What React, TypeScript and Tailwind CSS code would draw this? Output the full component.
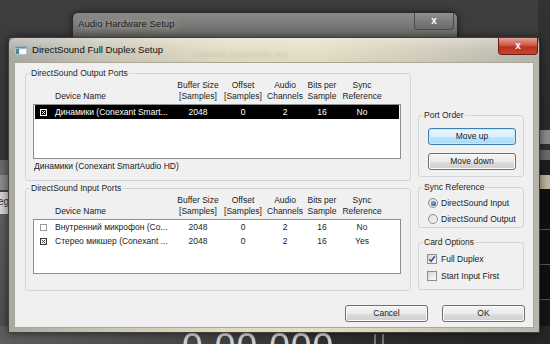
import React from "react";

const COLS = "grid grid-cols-[20px_121px_44px_46px_38px_36px_44px]";

function XBox({ checked, selected }: { checked: boolean; selected?: boolean }) {
  const c = selected ? "#ffffff" : "#3a3a3a";
  const b = selected ? "#ffffff" : checked ? "#3a3a3a" : "#9a9a9a";
  return (
    <svg width="7" height="7" viewBox="0 0 7 7" className="block">
      <rect x="0.5" y="0.5" width="6" height="6" fill="none" stroke={b} strokeWidth="1" />
      {checked && <path d="M1.8 1.8 L5.2 5.2 M5.2 1.8 L1.8 5.2" stroke={c} strokeWidth="1" />}
    </svg>
  );
}

function Row({
  name,
  checked,
  selected,
  sync,
}: {
  name: string;
  checked: boolean;
  selected?: boolean;
  sync: string;
}) {
  return (
    <div
      className={`${COLS} h-[14px] items-center leading-[11px] ${
        selected ? "bg-black text-white" : "text-[#1a1a1a]"
      }`}
    >
      <div className="flex pl-[5px]">
        <XBox checked={checked} selected={selected} />
      </div>
      <div className="whitespace-nowrap">{name}</div>
      <div className="flex justify-center">2048</div>
      <div className="flex justify-center">0</div>
      <div className="flex justify-center">2</div>
      <div className="flex justify-center">16</div>
      <div className="flex justify-center">{sync}</div>
    </div>
  );
}

function H({ a, b }: { a: string; b: string }) {
  return (
    <div className="flex flex-col items-center whitespace-nowrap">
      <span>{a}</span>
      <span>{b}</span>
    </div>
  );
}

function Header() {
  return (
    <div className={`${COLS} ml-[2px] h-[22px] leading-[11px] text-[#222]`}>
      <div />
      <div className="self-end whitespace-nowrap">Device Name</div>
      <H a="Buffer Size" b="[Samples]" />
      <H a="Offset" b="[Samples]" />
      <H a="Audio" b="Channels" />
      <H a="Bits per" b="Sample" />
      <H a="Sync" b="Reference" />
    </div>
  );
}

function Group({
  label,
  className,
  children,
}: {
  label: string;
  className: string;
  children: React.ReactNode;
}) {
  return (
    <div className={`relative rounded-[3px] border border-[#d3d6d9] ${className}`}>
      <span className="absolute -top-[6px] left-[4px] whitespace-nowrap bg-[#f0f0f0] px-[1px] leading-[10px] text-[#1e1e1e]">
        {label}
      </span>
      {children}
    </div>
  );
}

function Button({ label, focused }: { label: string; focused?: boolean }) {
  return (
    <div
      className={`flex h-[17px] items-center justify-center rounded-[3px] border text-[#1a1a1a] ${
        focused
          ? "border-[#3c7fb1] bg-[linear-gradient(180deg,#eaf6fd_0%,#d9f0fc_50%,#bee6fd_51%,#a7d9f5_100%)] shadow-[inset_0_0_0_1px_#c9e8f9]"
          : "border-[#707070] bg-[linear-gradient(180deg,#f4f4f4_0%,#ebebeb_50%,#dddddd_51%,#cfcfcf_100%)] shadow-[inset_0_0_0_1px_#fbfbfb]"
      }`}
    >
      {label}
    </div>
  );
}

function Radio({ on, label }: { on?: boolean; label: string }) {
  return (
    <div className="flex h-[14px] items-center gap-[3px]">
      <div className="flex h-[10px] w-[10px] items-center justify-center rounded-full border border-[#8e8f8f] bg-[linear-gradient(135deg,#d8d8d8,#fbfbfb)]">
        {on && (
          <div className="h-[5px] w-[5px] rounded-full bg-[radial-gradient(circle_at_40%_35%,#8fb8dc,#2c5f94_70%)]" />
        )}
      </div>
      <span className="whitespace-nowrap text-[#1a1a1a]">{label}</span>
    </div>
  );
}

function Check({ on, label }: { on?: boolean; label: string }) {
  return (
    <div className="flex h-[14px] items-center gap-[4px]">
      <div className="flex h-[10px] w-[10px] items-center justify-center border border-[#8e8f8f] bg-[linear-gradient(135deg,#d6d6d6,#fafafa)]">
        {on && (
          <svg width="8" height="8" viewBox="0 0 8 8" className="block">
            <path d="M1.2 4.2 L3.1 6.3 L6.8 1.2" fill="none" stroke="#3b4f86" strokeWidth="1.5" />
          </svg>
        )}
      </div>
      <span className="whitespace-nowrap text-[#1a1a1a]">{label}</span>
    </div>
  );
}

function WinIcon() {
  return (
    <svg width="12" height="9" viewBox="0 0 12 9" className="block">
      <rect x="0" y="0" width="12" height="9" fill="#dfe6ea" stroke="#8c99a3" strokeWidth="0.8" />
      <rect x="0.5" y="0.5" width="11" height="2" fill="#6c8fa8" />
      <rect x="1" y="3" width="3" height="5" fill="#3e8f8a" />
      <rect x="5" y="3.5" width="6" height="4" fill="#ffffff" />
    </svg>
  );
}

export default function App() {
  return (
    <div className="relative h-[344px] w-[550px] overflow-hidden bg-[linear-gradient(180deg,#3e3e3e_0%,#363636_50%,#2f2f2f_100%)] font-['Liberation_Sans',Arial,sans-serif] text-[8.5px]">
      {/* left desktop strip */}
      <div className="absolute left-0 top-[160px] flex w-[9px] flex-col">
        <div className="h-[15px] bg-[#6a6a6a]" />
        <div className="h-[15px] bg-[#8c8c8c]" />
        <div className="h-[2px] bg-[#444]" />
        <div className="h-[22px] overflow-hidden bg-[#d4d4d4] pt-[5px] text-[10px] leading-[10px] text-[#333]">
          <span className="-ml-[2px]">eg</span>
        </div>
        <div className="h-[130px] bg-[linear-gradient(180deg,#5e5e5e,#4a4a4a)]" />
      </div>

      {/* right desktop strip */}
      <div className="absolute right-0 top-0 flex h-[344px] w-[12px] flex-col bg-[#151515]">
        <div className="h-[130px] bg-[linear-gradient(180deg,#333,#2a2a2a)]" />
        <div className="h-[14px] bg-[#8a8a8a]" />
        <div className="h-[6px] bg-[#303030]" />
        <div className="h-[10px] bg-[#6a6a6a]" />
        <div className="h-[15px] bg-[#1e1e1e]" />
        <div className="h-[14px] bg-[#bdb49a]" />
        <div className="h-[40px] bg-[#101010]" />
        <div className="h-[1px] bg-[#555]" />
        <div className="h-[34px] bg-[#101010]" />
        <div className="h-[1px] bg-[#555]" />
        <div className="h-[34px] bg-[#101010]" />
        <div className="h-[1px] bg-[#555]" />
      </div>

      {/* bottom app strip with time readout */}
      <div className="absolute left-0 top-[326px] flex h-[18px] w-[550px] bg-[linear-gradient(90deg,#5e5e5e_0%,#4a4a4a_30%,#2e2e2e_60%,#262626_100%)]">
        <div className="ml-[182px] mt-[2px] text-[37px] leading-[37px] tracking-[1px] text-[#d2d2d2]">0.00.000</div>
        <div className="ml-[40px] mt-[8px] h-[10px] w-[10px] border-x-2 border-[#777]" />
      </div>

      {/* back window */}
      <div className="absolute left-[72px] top-[12px] h-[40px] w-[386px] rounded-t-[6px] border border-[#2b2b2b] bg-[linear-gradient(180deg,#8a8a88_0%,#747472_40%,#5c5c5a_100%)] shadow-[0_0_6px_rgba(0,0,0,0.5)]">
        <div className="flex h-[22px] items-center pl-[5px] text-[9.6px] text-[#1b1b1b] [text-shadow:0_0_6px_rgba(230,230,225,0.9)]">
          Audio Hardware Setup
        </div>
        <div className="absolute right-[3px] top-0 flex h-[17px] w-[40px] items-center justify-center rounded-b-[4px] border border-t-0 border-[#4a4a4a] bg-[linear-gradient(180deg,#8f8f8d,#6a6a68)] text-[10px] font-bold leading-none text-white">
          x
        </div>
      </div>

      {/* front window */}
      <div className="absolute left-[8px] top-[37px] flex h-[296px] w-[532px] flex-col rounded-t-[7px] border border-[#3f3e3a] bg-[linear-gradient(90deg,#a8a7a2_0%,#c9c5b4_18%,#e0dac0_40%,#e4dec4_58%,#d0cbb8_80%,#b6b4ad_100%)] shadow-[0_0_8px_rgba(0,0,0,0.6)]">
        <div className="relative flex h-[24px] items-center bg-[linear-gradient(180deg,rgba(255,255,255,0.35)_0%,rgba(255,255,255,0.05)_55%,rgba(0,0,0,0.02)_100%)] pl-[6px]">
          <WinIcon />
          <span className="ml-[5px] text-[9.6px] text-[#111]">DirectSound Full Duplex Setup</span>
          <span className="ml-[30px] mt-[10px] text-[8px] text-[#6b6552] opacity-20 blur-[1px]">
            Conexant SmartAudio HD)
          </span>
          <div className="absolute right-[1px] top-0 flex h-[17px] w-[40px] items-center justify-center rounded-b-[4px] border border-t-0 border-[#6b1e17] bg-[linear-gradient(180deg,#e0a196_0%,#cf5a48_45%,#b8321e_55%,#c9452c_100%)] text-[10px] font-bold leading-none text-white">
            x
          </div>
        </div>

        <div className="mx-[5px] mb-[4px] flex flex-1 flex-col border border-[#a9a69c] bg-[#f0f0f0] pl-[10px] pr-[8px] pt-[10px]">
          <div className="flex">
            <div className="flex w-[386px] flex-col gap-[7px]">
              <Group label="DirectSound Output Ports" className="h-[108px] pl-[7px] pt-[6px]">
                <Header />
                <div className="mt-[2px] h-[55px] w-[368px] border border-[#8e8f8f] bg-white px-[1px]">
                  <Row name="Динамики (Conexant Smart..." checked selected sync="No" />
                </div>
                <div className="mt-[2px] whitespace-nowrap pl-[1px] leading-[11px] text-[#1a1a1a]">
                  Динамики (Conexant SmartAudio HD)
                </div>
              </Group>
              <Group label="DirectSound Input Ports" className="h-[103px] pl-[7px] pt-[6px]">
                <Header />
                <div className="mt-[2px] h-[55px] w-[368px] border border-[#8e8f8f] bg-white px-[1px]">
                  <Row name="Внутренний микрофон (Co..." checked={false} sync="No" />
                  <Row name="Стерео микшер (Conexant ..." checked sync="Yes" />
                </div>
              </Group>
            </div>

            <div className="ml-[7px] mt-[42px] flex w-[106px] flex-col">
              <Group label="Port Order" className="flex h-[62px] flex-col gap-[8px] pl-[9px] pr-[7px] pt-[12px]">
                <Button label="Move up" focused />
                <Button label="Move down" />
              </Group>
              <Group label="Sync Reference" className="mt-[10px] flex h-[41px] flex-col gap-[2px] pl-[9px] pt-[8px]">
                <Radio on label="DirectSound Input" />
                <Radio label="DirectSound Output" />
              </Group>
              <Group label="Card Options" className="mt-[14px] flex h-[48px] flex-col gap-[3px] pl-[8px] pt-[9px]">
                <Check on label="Full Duplex" />
                <Check label="Start Input First" />
              </Group>
            </div>
          </div>

          <div className="mt-[14px] flex justify-end gap-[14px]">
            <div className="w-[83px]">
              <Button label="Cancel" />
            </div>
            <div className="w-[83px]">
              <Button label="OK" />
            </div>
          </div>
        </div>
      </div>
    </div>
  );
}
